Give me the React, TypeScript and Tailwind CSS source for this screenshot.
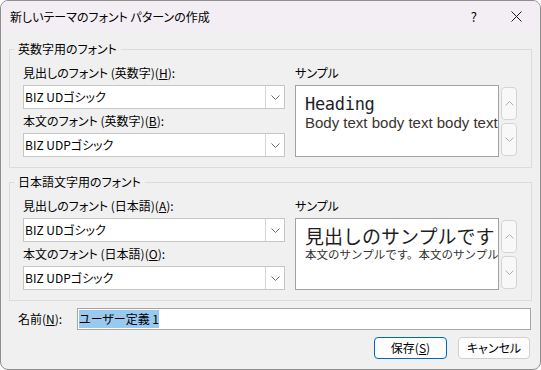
import React from "react";

const ui = "font-['Noto_Sans_CJK_JP',sans-serif] [font-feature-settings:'palt']";

function Chevron({ up = false, color = "#6a6a6a" }: { up?: boolean; color?: string }) {
  return (
    <svg width="9" height="5" viewBox="0 0 9 5">
      <path d={up ? "M0.5 4.5 L4.5 0.5 L8.5 4.5" : "M0.5 0.5 L4.5 4.5 L8.5 0.5"} fill="none" stroke={color} strokeWidth="1" />
    </svg>
  );
}

function Combo({ value }: { value: string }) {
  return (
    <div className="flex h-[24px] border border-[#c6c6c6] bg-white">
      <div className="flex-1 pl-[1px] text-[12px] leading-[22px] text-black">{value}</div>
      <div className="flex w-[19px] items-center justify-center border-l border-[#d6d6d6] bg-white">
        <Chevron />
      </div>
    </div>
  );
}

function ScrollButtons() {
  return (
    <div className="flex flex-col gap-[3px] pt-[2px]">
      <div className="flex h-[33px] w-[16px] items-center justify-center rounded-[4px] border border-[#d4d4d4] bg-[#f8f8f8]">
        <Chevron up color="#b0b0b0" />
      </div>
      <div className="flex h-[33px] w-[16px] items-center justify-center rounded-[4px] border border-[#d4d4d4] bg-[#f8f8f8]">
        <Chevron color="#b0b0b0" />
      </div>
    </div>
  );
}

function Group({
  title,
  label1,
  key1,
  label2,
  key2,
  sample,
}: {
  title: string;
  label1: string;
  key1: string;
  label2: string;
  key2: string;
  sample: React.ReactNode;
}) {
  return (
    <fieldset className="border border-[#dcdcdc]">
      <legend className="ml-[4px] px-[4px] text-[12px] leading-[16px] text-black">{title}</legend>
      <div className="grid grid-cols-[262px_222px] gap-x-[10px] pb-[10px] pl-[13px] pr-[14px] pt-[8px]">
        <div className="flex flex-col">
          <div className="mb-[4px] text-[12px] leading-[16px]">
            {label1}(<span className="underline">{key1}</span>):
          </div>
          <Combo value="BIZ UDゴシック" />
          <div className="mb-[4px] mt-[4px] text-[12px] leading-[16px]">
            {label2}(<span className="underline">{key2}</span>):
          </div>
          <Combo value="BIZ UDPゴシック" />
        </div>
        <div className="flex flex-col">
          <div className="mb-[4px] text-[12px] leading-[16px]">サンプル</div>
          <div className="flex gap-[2px]">
            <div className="h-[72px] w-[204px] overflow-hidden whitespace-nowrap border border-[#a2a2a2] bg-white pl-[9px]">
              {sample}
            </div>
            <ScrollButtons />
          </div>
        </div>
      </div>
    </fieldset>
  );
}

export default function App() {
  return (
    <div className="h-[370px] w-[541px] bg-white">
      <div className={`flex h-[370px] w-[541px] flex-col overflow-hidden rounded-[8px] border border-[#8e8e8e] bg-[#f0f0f0] text-black ${ui}`}>
        {/* Title bar */}
        <div className="flex h-[31px] shrink-0 items-center bg-[#f3eef4] pl-[9px]">
          <span className="text-[12px]">新しいテーマのフォント パターンの作成</span>
          <span className="ml-auto mr-[34px] text-[13px]">?</span>
          <svg width="11" height="11" viewBox="0 0 11 11" className="mr-[18px]">
            <path d="M0.5 0.5 L10.5 10.5 M10.5 0.5 L0.5 10.5" stroke="#1b1b1b" strokeWidth="1" />
          </svg>
        </div>

        <div className="flex flex-col px-[8px] pt-[9px]">
          <Group
            title="英数字用のフォント"
            label1="見出しのフォント (英数字)"
            key1="H"
            label2="本文のフォント (英数字)"
            key2="B"
            sample={
              <>
                <div className="pt-[7px] font-['DejaVu_Sans_Mono',monospace] text-[17px] leading-[22px] tracking-[-0.3px] text-[#1e1e2a]">Heading</div>
                <div className="font-['Liberation_Sans',sans-serif] text-[15px] leading-[16px] text-[#3a3330]">
                  Body text body text body text
                </div>
              </>
            }
          />
          <div className="h-[6px]" />
          <Group
            title="日本語文字用のフォント"
            label1="見出しのフォント (日本語)"
            key1="A"
            label2="本文のフォント (日本語)"
            key2="O"
            sample={
              <>
                <div className="pt-[5px] text-[19px] leading-[23px] text-[#1e1e1e] [font-feature-settings:normal]">見出しのサンプルです</div>
                <div className="text-[11.5px] leading-[14px] text-[#333] [font-feature-settings:normal]">
                  本文のサンプルです。本文のサンプルです。
                </div>
              </>
            }
          />

          {/* Name row */}
          <div className="mt-[7px] flex h-[22px] items-center pl-[9px] pr-[1px]">
            <div className="w-[59px] text-[12px]">
              名前(<span className="underline">N</span>):
            </div>
            <div className="flex h-[22px] flex-1 items-center border border-[#a6a6a6] bg-white pl-[1px]">
              <span className="bg-[#99c9ef] text-[12px] leading-[18px]">ユーザー定義 1</span>
            </div>
          </div>

          {/* Buttons */}
          <div className="mt-[7px] flex justify-end gap-[11px] pr-[2px]">
            <button className="flex h-[22px] w-[73px] items-center justify-center rounded-[4px] border border-[#0067c0] bg-[#fdfdfd] text-[12px]">
              保存(<span className="underline">S</span>)
            </button>
            <button className="flex h-[22px] w-[72px] items-center justify-center rounded-[4px] border border-[#d0d0d0] bg-[#fdfdfd] text-[12px]">
              キャンセル
            </button>
          </div>
        </div>
      </div>
    </div>
  );
}
